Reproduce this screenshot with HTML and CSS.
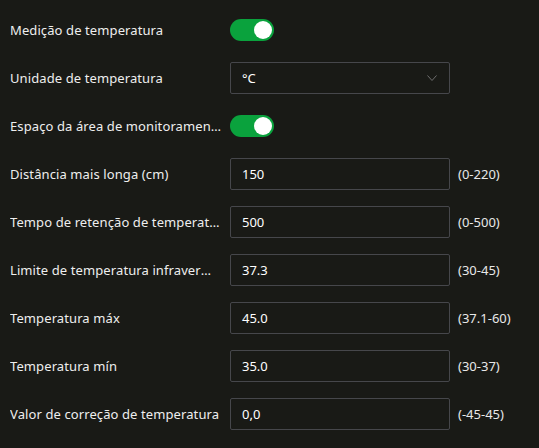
FILE: index.html
```html
<!DOCTYPE html>
<html>
<head>
<meta charset="utf-8">
<link rel="stylesheet" href="styles.css">
</head>
<body>
<div class="form">
  <div class="row">
    <div class="label">Medição de temperatura</div>
    <div class="toggle on"><span class="knob"></span></div>
  </div>
  <div class="row">
    <div class="label">Unidade de temperatura</div>
    <div class="select"><span class="value">°C</span>
      <svg class="chev" width="10" height="6" viewBox="0 0 10 6"><path d="M0.5 0.5 L5 5.5 L9.5 0.5" fill="none" stroke="#6e6e6e" stroke-width="1"/></svg>
    </div>
  </div>
  <div class="row">
    <div class="label">Espaço da área de monitoramento</div>
    <div class="toggle on"><span class="knob"></span></div>
  </div>
  <div class="row">
    <div class="label">Distância mais longa (cm)</div>
    <div class="input">150</div>
    <div class="range">(0-220)</div>
  </div>
  <div class="row">
    <div class="label">Tempo de retenção de temperatura</div>
    <div class="input">500</div>
    <div class="range">(0-500)</div>
  </div>
  <div class="row">
    <div class="label">Limite de temperatura infravermelha</div>
    <div class="input">37.3</div>
    <div class="range">(30-45)</div>
  </div>
  <div class="row">
    <div class="label">Temperatura máx</div>
    <div class="input">45.0</div>
    <div class="range">(37.1-60)</div>
  </div>
  <div class="row">
    <div class="label">Temperatura mín</div>
    <div class="input">35.0</div>
    <div class="range">(30-37)</div>
  </div>
  <div class="row">
    <div class="label">Valor de correção de temperatura</div>
    <div class="input">0,0</div>
    <div class="range">(-45-45)</div>
  </div>
</div>
</body>
</html>
```
FILE: styles.css
```css
html, body {
  margin: 0;
  padding: 0;
  background: #191a16;
}
body {
  font-family: "Noto Sans", "Open Sans", sans-serif;
  font-size: 13px;
  color: #eeeeee;
  width: 539px;
  height: 448px;
  overflow: hidden;
}
.form {
  display: flex;
  flex-direction: column;
  gap: 16px;
  padding: 14px 0 0 10px;
}
.row {
  display: flex;
  align-items: center;
  height: 32px;
}
.label {
  width: 212px;
  margin-right: 8px;
  white-space: nowrap;
  overflow: hidden;
  text-overflow: ellipsis;
  letter-spacing: 0.1px;
}
.toggle {
  width: 44px;
  height: 22px;
  border-radius: 11px;
  background: #0aa23d;
  position: relative;
  box-sizing: border-box;
}
.knob {
  position: absolute;
  top: 2px;
  right: 2px;
  width: 18px;
  height: 18px;
  border-radius: 50%;
  background: #ffffff;
}
.select, .input {
  width: 220px;
  height: 32px;
  box-sizing: border-box;
  border: 1px solid #46474b;
  border-radius: 2px;
  display: flex;
  align-items: center;
  padding: 0 12px 0 11px;
  font-size: 13px;
  color: #ffffff;
}
.select {
  justify-content: space-between;
}
.chev {
  display: block;
}
.range {
  margin-left: 8px;
  color: #e8e8e8;
}
```
